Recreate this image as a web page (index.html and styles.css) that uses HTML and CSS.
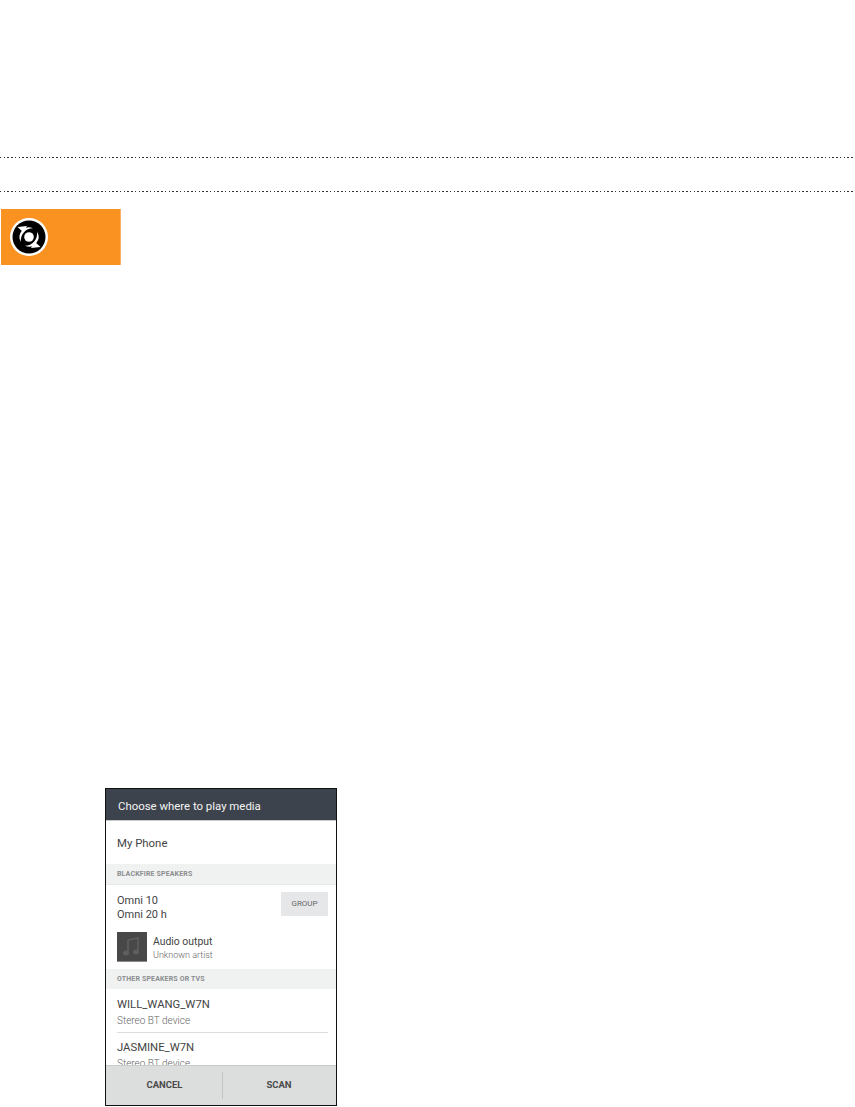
FILE: index.html
```html
<!DOCTYPE html>
<html lang="en">
<head>
<meta charset="utf-8">
<title>Choose where to play media</title>
<link rel="stylesheet" href="styles.css">
</head>
<body>
<div class="rule rule-first"></div>
<div class="rule rule-second"></div>
<div class="callout">
  <svg class="callout-icon" width="40" height="40" viewBox="-20 -20 40 40">
    <circle r="19" fill="#fff"/>
    <circle r="16.500" fill="#000"/>
    <circle r="4.800" fill="#fff"/>
    <path d="M4-8.700A9.600 9.600 0 0 0-8 5.200A12 12 0 0 1 4-8.700z" fill="#fff"/>
    <path d="M-11.500-10L-2-11-5.500-4.500z" fill="#fff"/>
    <path d="M-4 8.700A9.600 9.600 0 0 0 8-5.200A12 12 0 0 1-4 8.700z" fill="#fff"/>
    <path d="M11.500 10L2 11 5.500 4.500z" fill="#fff"/>
  </svg>
</div>
<section class="phone">
  <header class="phone-title">Choose where to play media</header>
  <div class="phone-body">
    <div class="my-phone">My Phone</div>
    <div class="section-label section-label-first">BLACKFIRE SPEAKERS</div>
    <div class="group-row">
      <div class="group-names">
        <div>Omni 10</div>
        <div>Omni 20 h</div>
      </div>
      <div class="group-button">GROUP</div>
    </div>
    <div class="track">
      <div class="track-art">
        <svg width="30" height="29" viewBox="0 0 30 29">
          <path d="M11 8l10-2v14M11 8v13" fill="none" stroke="#5f5f5f" stroke-width="1.600"/>
          <ellipse cx="9" cy="21" rx="3" ry="2.500" fill="#5f5f5f"/>
          <ellipse cx="19" cy="20" rx="3" ry="2.500" fill="#5f5f5f"/>
        </svg>
      </div>
      <div class="track-text">
        <div class="track-title">Audio output</div>
        <div class="track-artist">Unknown artist</div>
      </div>
    </div>
    <div class="section-label section-label-second">OTHER SPEAKERS OR TVS</div>
    <div class="device device-first">
      <div class="device-name">WILL_WANG_W7N</div>
      <div class="device-type">Stereo BT device</div>
    </div>
    <div class="device device-second">
      <div class="device-name">JASMINE_W7N</div>
      <div class="device-type">Stereo BT device</div>
    </div>
  </div>
  <footer class="phone-actions">
    <div class="action action-first">CANCEL</div>
    <div class="action action-divided">SCAN</div>
  </footer>
</section>
</body>
</html>
```
FILE: styles.css
```css
* { box-sizing: border-box; }
html, body { margin: 0; padding: 0; background: #fff; }
body {
  width: 855px;
  height: 1107px;
  overflow: hidden;
  padding-top: 157px;
  font-family: Roboto, "Liberation Sans", sans-serif;
}
.rule {
  height: 1px;
  background-image: repeating-linear-gradient(to right, #333 0, #333 1.500px, #fff 1.500px, #fff 3.750px);
}
.rule-second { margin-top: 33px; }
.callout {
  width: 120px;
  height: 56px;
  margin: 17px 0 0 1px;
  padding: 8px;
  background: #f99220;
  border-right: 1px solid #fbb165;
}
.callout-icon { display: block; }
.phone {
  width: 232px;
  height: 318px;
  margin: 523px 0 0 105px;
  border: 1px solid #111;
  display: flex;
  flex-direction: column;
  color: #444;
  background: #fff;
}
.phone-title {
  height: 32px;
  flex: none;
  padding: 9px 0 0 12px;
  background: #3d434c;
  border-bottom: 1px solid #c8cacc;
  color: #f4f4f4;
  font-size: 11.400px;
  line-height: 16px;
}
.phone-body { flex: 1; min-height: 0; overflow: hidden; }
.my-phone {
  height: 43px;
  padding: 14px 0 0 11px;
  font-size: 11.400px;
  line-height: 16px;
}
.section-label {
  padding-left: 11px;
  background: #f0f1f1;
  color: #8b8d8f;
  font-size: 7px;
  font-weight: 700;
  letter-spacing: .15px;
}
.section-label-first {
  height: 21px;
  line-height: 20px;
  border-bottom: 1px solid #e6e7e7;
}
.section-label-second {
  height: 20px;
  line-height: 20px;
  margin-top: 7px;
}
.group-row {
  display: flex;
  justify-content: space-between;
  padding: 7px 8px 0 11px;
}
.group-names {
  font-size: 11px;
  line-height: 14px;
  padding-top: 2px;
}
.group-button {
  width: 47px;
  height: 24px;
  background: #e6e7e8;
  color: #66686a;
  font-size: 8px;
  line-height: 23px;
  text-align: center;
}
.track {
  display: flex;
  gap: 6px;
  margin: 10px 0 0 11px;
}
.track-art {
  width: 30px;
  height: 30px;
  background: #484848;
  border-bottom: 1px solid #8a8a8a;
}
.track-art svg { display: block; }
.track-title { font-size: 10.400px; line-height: 13px; margin-top: 3px; }
.track-artist { font-size: 9px; font-weight: 300; line-height: 11px; margin-top: 2px; color: #666; }
.device { margin: 0 8px 0 11px; }
.device-first {
  border-bottom: 1px solid #dcdddd;
  height: 44px;
}
.device-first .device-name { padding-top: 8px; }
.device-second .device-name { padding-top: 7px; }
.device-name { font-size: 11.300px; line-height: 16px; }
.device-type { font-size: 10px; font-weight: 300; line-height: 13px; margin-top: 1px; color: #666; }
.phone-actions {
  height: 40px;
  flex: none;
  display: flex;
  background: #dcdddd;
  border-top: 1px solid #c9caca;
  color: #4a4a4a;
  font-size: 9.500px;
  font-weight: 700;
}
.action {
  text-align: center;
  line-height: 38px;
  position: relative;
}
.action-first { width: 116px; padding-left: 1px; }
.action-divided { width: 114px; }
.action-divided::before {
  content: "";
  position: absolute;
  left: 0;
  top: 6px;
  height: 27px;
  width: 1px;
  background: #c4c5c5;
}
```
